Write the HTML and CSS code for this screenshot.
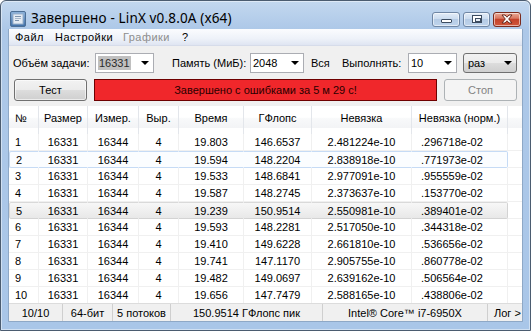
FILE: index.html
```html
<!DOCTYPE html>
<html lang="ru">
<head>
<meta charset="utf-8">
<title>LinX</title>
<link rel="stylesheet" href="styles.css">
</head>
<body>
<div class="window">
  <div class="titlebar">
    <svg class="appicon" width="16" height="16" viewBox="0 0 16 16">
      <defs>
        <linearGradient id="ig" x1="0" y1="0" x2="0" y2="1">
          <stop offset="0" stop-color="#8fb4dc"/>
          <stop offset="1" stop-color="#3f6fa8"/>
        </linearGradient>
      </defs>
      <rect x="0.5" y="0.5" width="15" height="15" rx="1.5" fill="url(#ig)" stroke="#4d6f95"/>
      <rect x="3" y="3" width="10" height="10" fill="#e4ebf3" stroke="#9bb2cc"/>
      <rect x="5" y="5" width="6" height="1" fill="#7d93ad"/>
      <rect x="5" y="7" width="6" height="1" fill="#a7b7c9"/>
      <rect x="5" y="9" width="4" height="1" fill="#7d93ad"/>
    </svg>
    <span class="title">Завершено - LinX v0.8.0A (x64)</span>
    <div class="caption">
      <div class="cbtn cmin"><span class="g-min"></span></div>
      <div class="cbtn cmax"><span class="g-max"></span></div>
      <div class="cbtn cclose">
        <svg width="14" height="10" viewBox="0 0 14 10">
          <path d="M2 1 H5 L7 3.2 L9 1 H12 L8.7 5 L12 9 H9 L7 6.8 L5 9 H2 L5.3 5 Z" fill="#fff" stroke="#6b2a1e" stroke-width="1" stroke-linejoin="round"/>
        </svg>
      </div>
    </div>
  </div>
  <div class="client">
    <div class="menubar">
      <span class="mi m1">Файл</span>
      <span class="mi m2">Настройки</span>
      <span class="mi m3 disabled">Графики</span>
      <span class="mi">?</span>
    </div>
    <div class="controls">
      <span class="lbl l1">Объём задачи:</span>
      <div class="combo c1"><span class="sel">16331</span><span class="arrow"></span></div>
      <span class="lbl l2">Память (МиБ):</span>
      <div class="combo c2"><span>2048</span><span class="arrow"></span></div>
      <span class="lbl l3">Вся</span>
      <span class="lbl l4">Выполнять:</span>
      <div class="combo c3"><span>10</span><span class="arrow"></span></div>
      <div class="combo dlist c4"><span>раз</span><span class="arrow"></span></div>
    </div>
    <div class="actions">
      <div class="btn">Тест</div>
      <div class="status-red">Завершено с ошибками за 5 м 29 с!</div>
      <div class="btn disabled">Стоп</div>
    </div>
    <div class="listview">
      <table class="grid">
        <colgroup>
          <col class="w1"><col class="w2"><col class="w3"><col class="w4"><col class="w5"><col class="w6"><col class="w7"><col class="w8"><col class="w9">
        </colgroup>
        <thead>
          <tr><th class="left">№</th><th>Размер</th><th>Измер.</th><th>Выр.</th><th>Время</th><th>ГФлопс</th><th>Невязка</th><th>Невязка (норм.)</th><th></th></tr>
        </thead>
        <tbody>
          <tr><td class="left">1</td><td>16331</td><td>16344</td><td>4</td><td>19.803</td><td>146.6537</td><td>2.481224e-10</td><td class="norm">.296718e-02</td><td class="pad"></td></tr>
          <tr class="focus"><td class="left">2</td><td>16331</td><td>16344</td><td>4</td><td>19.594</td><td>148.2204</td><td>2.838918e-10</td><td class="norm">.771973e-02</td><td class="pad"></td></tr>
          <tr><td class="left">3</td><td>16331</td><td>16344</td><td>4</td><td>19.533</td><td>148.6841</td><td>2.977091e-10</td><td class="norm">.955559e-02</td><td class="pad"></td></tr>
          <tr><td class="left">4</td><td>16331</td><td>16344</td><td>4</td><td>19.587</td><td>148.2745</td><td>2.373637e-10</td><td class="norm">.153770e-02</td><td class="pad"></td></tr>
          <tr class="hot"><td class="left">5</td><td>16331</td><td>16344</td><td>4</td><td>19.239</td><td>150.9514</td><td>2.550981e-10</td><td class="norm">.389401e-02</td><td class="pad"></td></tr>
          <tr><td class="left">6</td><td>16331</td><td>16344</td><td>4</td><td>19.593</td><td>148.2281</td><td>2.517050e-10</td><td class="norm">.344318e-02</td><td class="pad"></td></tr>
          <tr><td class="left">7</td><td>16331</td><td>16344</td><td>4</td><td>19.410</td><td>149.6228</td><td>2.661810e-10</td><td class="norm">.536656e-02</td><td class="pad"></td></tr>
          <tr><td class="left">8</td><td>16331</td><td>16344</td><td>4</td><td>19.741</td><td>147.1170</td><td>2.905755e-10</td><td class="norm">.860778e-02</td><td class="pad"></td></tr>
          <tr><td class="left">9</td><td>16331</td><td>16344</td><td>4</td><td>19.482</td><td>149.0697</td><td>2.639162e-10</td><td class="norm">.506564e-02</td><td class="pad"></td></tr>
          <tr><td class="left">10</td><td>16331</td><td>16344</td><td>4</td><td>19.656</td><td>147.7479</td><td>2.588165e-10</td><td class="norm">.438806e-02</td><td class="pad"></td></tr>
        </tbody>
      </table>
    </div>
    <div class="statusbar">
      <span class="sp s1">10/10</span>
      <span class="sp s2">64-бит</span>
      <span class="sp s3">5 потоков</span>
      <span class="sp s4">150.9514 ГФлопс пик</span>
      <span class="sp s5">Intel® Core™ i7-6950X</span>
      <span class="sp s6">Лог &gt;</span>
    </div>
  </div>
</div>
</body>
</html>
```

FILE: styles.css
```css
* { box-sizing: border-box; }
html, body { margin: 0; padding: 0; background: #ffffff; }
body { width: 531px; height: 331px; overflow: hidden; font-family: "Liberation Sans", Arial, sans-serif; font-size: 11px; color: #000; }

.window {
  width: 531px; height: 331px;
  border: 1px solid #4b5c70;
  border-radius: 6px 6px 0 0;
  background: linear-gradient(#c3d8ef 0, #adc8e8 28px, #a9c6e8 100%);
  padding: 0 7px 8px 7px;
  display: flex; flex-direction: column;
  box-shadow: inset 0 0 0 1px rgba(255,255,255,0.45);
}

.titlebar {
  height: 28px; flex: none;
  display: flex; align-items: center;
  padding-left: 2px;
}
.appicon { flex: none; margin-top: 7px; }
.title {
  font-family: "Noto Sans", "Open Sans", sans-serif;
  font-size: 13.5px; color: #000;
  margin-left: 5px; margin-top: 5px;
  letter-spacing: 0.15px;
}
.caption { margin-left: auto; display: flex; gap: 3px; margin-top: 8px; margin-right: 2px; }
.cbtn {
  width: 28px; height: 15px;
  border: 1px solid #6f86a4; border-radius: 3px;
  background: linear-gradient(#e3ecf7 0, #cbdcef 45%, #b5cbe5 50%, #bfd4ec 100%);
  display: flex; align-items: center; justify-content: center;
  box-shadow: inset 0 0 0 1px rgba(255,255,255,0.55);
}
.cmax { width: 27px; }
.g-min { width: 11px; height: 4px; border: 1px solid #3c4c60; background: #fff; border-radius: 1px; margin-top: 4px; }
.g-max { width: 10px; height: 8px; border: 1px solid #3c4c60; background: #fff; position: relative; }
.g-max::after { content: ""; position: absolute; left: 2px; top: 2px; width: 4px; height: 2px; border: 1px solid #3c4c60; background: #e6edf5; }
.cclose {
  width: 28px; border-color: #7b2b1d;
  background: linear-gradient(#e9a996 0, #d97862 40%, #c4432b 50%, #d2583d 100%);
}

.client {
  flex: 1; background: #f0f0f0;
  display: flex; flex-direction: column;
  border: 1px solid #8ea8c6;
  border-top: none;
  overflow: hidden;
}

.menubar {
  height: 17px; flex: none;
  background: linear-gradient(#fbfcfe 0, #eef2f9 60%, #dfe5f2 100%);
  border-bottom: 1px solid #d6dcea;
  display: flex; align-items: center;
  padding-left: 6px;
}
.mi { letter-spacing: 0.45px; white-space: nowrap; }
.m1 { width: 40px; }
.m2 { width: 68px; }
.m3 { width: 59px; }
.mi.disabled { color: #8d8d8d; }

.controls {
  height: 20px; flex: none; margin-top: 7px;
  display: flex; align-items: center;
  padding-left: 4px;
}
.lbl { white-space: nowrap; }
.l1 { width: 82px; }
.l2 { margin-left: 18px; width: 78px; }
.l3 { margin-left: 7px; width: 31px; }
.l4 { width: 66px; }
.combo {
  height: 20px; background: #fff;
  border: 1px solid #abadb3;
  display: flex; align-items: center; justify-content: space-between;
  padding: 0 4px 0 2px;
}
.combo .arrow { width: 0; height: 0; border-left: 4px solid transparent; border-right: 4px solid transparent; border-top: 4px solid #000; }
.c1 { width: 59px; }
.c1 .sel { background: #c0c0c0; color: #2a2a2a; padding: 1px 1px; }
.c2 { width: 54px; }
.c3 { width: 49px; margin-left: 0; }
.c4 {
  width: 54px; margin-left: 6px;
  border: 1px solid #707070; border-radius: 3px;
  background: linear-gradient(#f2f2f2 0, #ebebeb 50%, #dddddd 51%, #cfcfcf 100%);
  padding-left: 4px;
}

.actions {
  height: 22px; flex: none; margin-top: 6px;
  display: flex; align-items: center;
  padding-left: 5px;
}
.btn {
  width: 73px; height: 22px;
  border: 1px solid #707070; border-radius: 3px;
  background: linear-gradient(#f2f2f2 0, #ebebeb 50%, #dddddd 51%, #cfcfcf 100%);
  display: flex; align-items: center; justify-content: center;
  box-shadow: inset 0 0 0 1px rgba(255,255,255,0.6);
}
.btn.disabled { background: #f4f4f4; border-color: #adb2b5; color: #838383; box-shadow: none; }
.status-red {
  width: 343px; height: 22px; margin: 0 7px;
  background: #f0272b; border: 1px solid #6e0000;
  display: flex; align-items: center; justify-content: center;
  color: #2a0000;
}

.listview {
  flex: none; margin-top: 5px; height: 197px;
  background: #fff;
  overflow: hidden;
}
.grid { border-collapse: separate; border-spacing: 0; table-layout: fixed; width: 515px; }
.w1 { width: 30px; } .w2 { width: 49px; } .w3 { width: 51px; } .w4 { width: 40px; }
.w5 { width: 65px; } .w6 { width: 68px; } .w7 { width: 100px; } .w8 { width: 96px; } .w9 { width: 16px; }
.grid th {
  height: 28px; font-weight: normal; text-align: center; padding: 0 0 5px 0;
  background: linear-gradient(#ffffff 0, #ffffff 40%, #f8f9fa 45%, #f3f4f6 78%, #ffffff 80%);
  border-right: 1px solid #e3e6eb;
  white-space: nowrap;
}
.grid td {
  height: 17px; padding: 0; text-align: center; white-space: nowrap;
  border-right: 1px solid #f0f0f0;
  border-bottom: 1px solid #f0f0f0;
}
.grid .left { text-align: left; padding-left: 6px; }
.grid th.left { padding-left: 6px; }
.grid td.norm { text-align: left; padding-left: 9px; }
.grid tr.focus td:not(.pad) { border-top: 1px solid #c6dbf5; border-bottom: 1px solid #c6dbf5; border-right-color: #fbfdff; background: #fbfdff; }
.grid tr.focus td:first-child { border-left: 1px solid #c6dbf5; border-radius: 2px 0 0 2px; }
.grid tr.focus td.norm { border-right: 1px solid #c6dbf5; border-radius: 0 2px 2px 0; }
.grid tr.hot td:not(.pad) { background: linear-gradient(#f7f7f7, #e8e8e8); border-top: 1px solid #d9d9d9; border-bottom: 1px solid #d3d3d3; border-right-color: transparent; }
.grid tr.hot td:first-child { border-left: 1px solid #d9d9d9; border-radius: 2px 0 0 2px; }
.grid tr.hot td.norm { border-right: 1px solid #d3d3d3; border-radius: 0 2px 2px 0; }
.grid tr.focus td, .grid tr.hot td { height: 17px; }

.statusbar {
  flex: 1; display: flex; align-items: center;
  background: #f0f0f0;
  border-top: 1px solid #dcdcdc;
}
.sp { height: 100%; display: flex; align-items: center; justify-content: center; border-right: 1px solid #cfcfcf; white-space: nowrap; }
.s1 { width: 54px; } .s2 { width: 50px; } .s3 { width: 58px; } .s4 { width: 152px; } .s5 { width: 165px; }
.s6 { flex: 1; border-right: none; justify-content: flex-start; padding-left: 6px; }
```
